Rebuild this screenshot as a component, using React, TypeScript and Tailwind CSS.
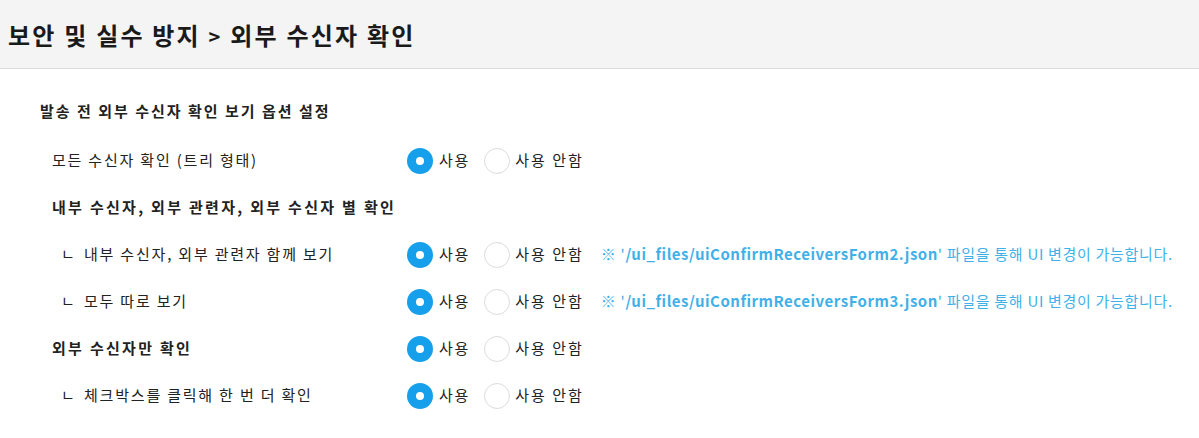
import React from "react";

const font = { fontFamily: '"Noto Sans CJK KR", "Noto Sans", sans-serif' };

function Radios() {
  return (
    <div className="flex items-center">
      <span className="w-[26px] h-[26px] rounded-full bg-[#16a0ec] flex items-center justify-center">
        <span className="w-[8px] h-[8px] rounded-full bg-white" />
      </span>
      <span className="ml-[6px] text-[15px] tracking-[1.8px] text-[#222]">사용</span>
      <span className="ml-[14px] w-[26px] h-[26px] rounded-full border border-[#dcdcdc] bg-white" />
      <span className="ml-[5px] text-[15px] tracking-[2px] text-[#222]">사용 안함</span>
    </div>
  );
}

function Row({
  label,
  sub,
  bold,
  radios = true,
  note,
}: {
  label: string;
  sub?: boolean;
  bold?: boolean;
  radios?: boolean;
  note?: string;
}) {
  return (
    <div className="flex items-center h-[47px]">
      <div
        className={`w-[355px] flex items-center text-[#222] ${
          bold ? "font-bold text-[15px] tracking-[2.3px]" : "text-[15px] tracking-[1.8px]"
        }`}
      >
        {sub ? (
          <>
            <span className="ml-[9px] w-[23px]">ㄴ</span>
            <span>{label}</span>
          </>
        ) : (
          <span>{label}</span>
        )}
      </div>
      {radios && <Radios />}
      {note && (
        <div className="ml-[17px] text-[15px] tracking-[0.7px] text-[#3fb1e8] whitespace-nowrap">
          ※ '<span className="font-bold tracking-[0.5px]">{note}</span>' 파일을 통해 UI 변경이 가능합니다.
        </div>
      )}
    </div>
  );
}

export default function App() {
  return (
    <div className="w-[1199px] h-[438px] bg-white overflow-hidden" style={font}>
      <div className="h-[69px] bg-[#f4f4f4] border-b border-[#dcdcdc] flex items-center pl-[8px] pt-[2px]">
        <h1 className="text-[24px] font-bold text-[#1a1a1a] tracking-[2.2px] whitespace-nowrap">
          보안 및 실수 방지 <span className="text-[20px]">&gt;</span> 외부 수신자 확인
        </h1>
      </div>
      <div className="pl-[40px] pt-[31px]">
        <div className="text-[15px] font-bold text-[#222] tracking-[2px] leading-[22px]">
          발송 전 외부 수신자 확인 보기 옵션 설정
        </div>
        <div className="pl-[12px] mt-[15px]">
          <Row label="모든 수신자 확인 (트리 형태)" />
          <Row label="내부 수신자, 외부 관련자, 외부 수신자 별 확인" bold radios={false} />
          <Row label="내부 수신자, 외부 관련자 함께 보기" sub note="/ui_files/uiConfirmReceiversForm2.json" />
          <Row label="모두 따로 보기" sub note="/ui_files/uiConfirmReceiversForm3.json" />
          <Row label="외부 수신자만 확인" bold />
          <Row label="체크박스를 클릭해 한 번 더 확인" sub />
        </div>
      </div>
    </div>
  );
}
